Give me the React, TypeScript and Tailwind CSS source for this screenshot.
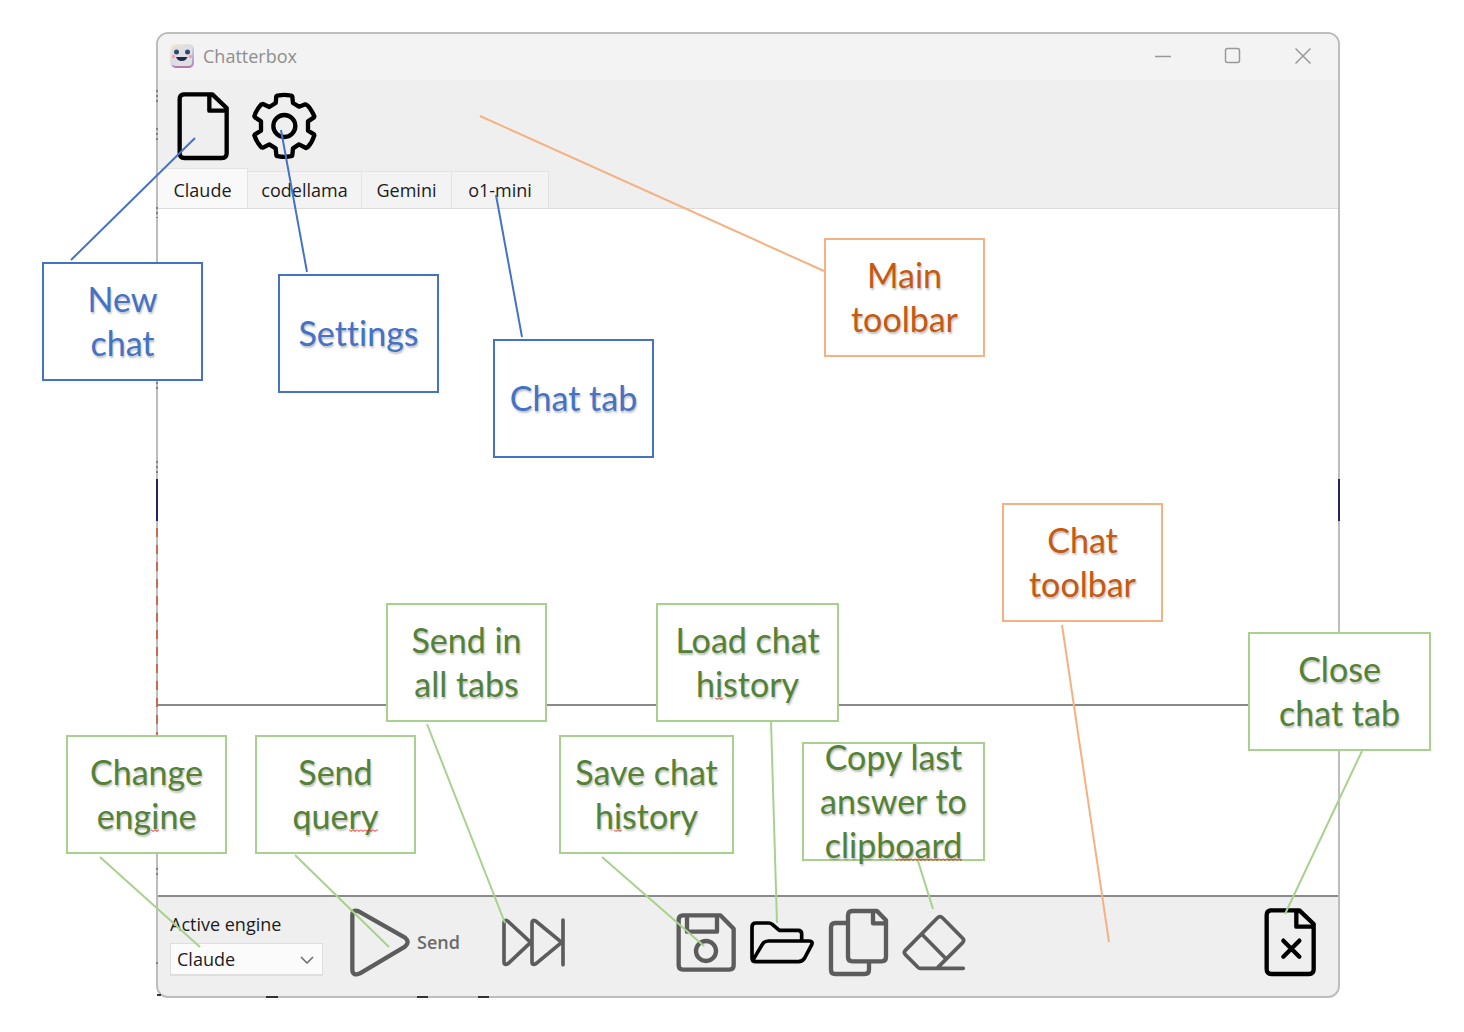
import type { ReactNode } from 'react';

type Tone = 'blue' | 'orange' | 'green';

const tones: Record<Tone, string> = {
  blue: 'border-[#4472c4] text-[#4472c4]',
  orange: 'border-[#f4b183] text-[#c55a11]',
  green: 'border-[#a9d18e] text-[#548235]',
};

const strokes: Record<Tone, string> = {
  blue: '#4472c4',
  orange: '#f4b183',
  green: '#a9d18e',
};

function Callout({ tone, place, children }: { tone: Tone; place: string; children: ReactNode }) {
  return (
    <div
      className={`absolute flex h-[119px] items-center justify-center border-2 bg-white pb-0.5 text-center font-['Lato',sans-serif] text-[34px] leading-[44px] whitespace-nowrap [font-variant-ligatures:none] [text-shadow:1px_2px_2px_rgba(0,0,0,0.25)] ${tones[tone]} ${place}`}
    >
      <p>{children}</p>
    </div>
  );
}

function Zigzag({ children }: { children: ReactNode }) {
  return (
    <span className="relative">
      {children}
      <svg className="absolute bottom-1 left-0 h-[3px] w-full" aria-hidden="true">
        <defs>
          <pattern id="zigzag" width="4" height="3" patternUnits="userSpaceOnUse">
            <path d="M0 .5L2 2.5L4 .5" fill="none" stroke="#ff1010" strokeWidth="1" />
          </pattern>
        </defs>
        <rect width="100%" height="3" fill="url(#zigzag)" />
      </svg>
    </span>
  );
}

const connectors: [Tone, number, number, number, number][] = [
  ['blue', 195, 138, 71, 260],
  ['blue', 281, 130, 307, 272],
  ['blue', 496, 195, 522, 337],
  ['orange', 480, 116, 824, 271],
  ['orange', 1062, 625, 1109, 942],
  ['green', 427, 724, 505, 923],
  ['green', 771, 722, 777, 923],
  ['green', 1362, 751, 1285, 914],
  ['green', 100, 857, 200, 947],
  ['green', 295, 855, 389, 947],
  ['green', 602, 857, 704, 946],
  ['green', 918, 861, 933, 909],
];

function Icon({ box, size, dark, children }: { box: string; size: string; dark?: boolean; children: ReactNode }) {
  return (
    <svg
      viewBox={box}
      className={`block ${size}`}
      fill="none"
      stroke={dark ? '#000' : '#5c5c5c'}
      strokeWidth="13"
      strokeLinejoin="round"
      strokeLinecap="round"
      aria-hidden="true"
    >
      {children}
    </svg>
  );
}

const page = 'M24 13H112L155 54V190Q155 204 141 204H28Q14 204 14 190V27Q14 13 28 13M103 13V62H155';

function Face() {
  return (
    <svg viewBox="0 0 26 26" className="size-[26px]" aria-hidden="true">
      <defs>
        <linearGradient id="rim" x1="0" y1="0" x2="1" y2="1">
          <stop offset="0" stopColor="#f8eccb" />
          <stop offset=".5" stopColor="#d9dbe8" />
          <stop offset="1" stopColor="#a77fd0" />
        </linearGradient>
      </defs>
      <rect x="1" y="1" width="24" height="24" rx="5" fill="url(#rim)" />
      <path d="M3 22Q4 25 8 25H19Q22 25 23 23Z" fill="#b57aab" />
      <rect x="3" y="3" width="20" height="20" rx="4" fill="#dfdfe2" />
      <circle cx="7.500" cy="9" r="2.500" fill="#33486f" />
      <circle cx="18.500" cy="9" r="2.500" fill="#33486f" />
      <circle cx="4.500" cy="13.500" r="1.700" fill="#f3a0b4" />
      <circle cx="21.500" cy="13.500" r="1.700" fill="#f3a0b4" />
      <path d="M7 14H18.500Q17 18 12.700 18T7 14Z" fill="#22284f" />
    </svg>
  );
}

function Tab({ width, active, children }: { width: string; active?: boolean; children: ReactNode }) {
  return (
    <button
      role="tab"
      aria-selected={!!active}
      className={`${width} border-t border-r border-[#e3e3e3] text-center ${
        active ? 'h-[40px] bg-[#f9f9f9] pt-1' : 'h-[37px] bg-[#f3f3f3] pt-px'
      }`}
    >
      {children}
    </button>
  );
}

export default function App() {
  return (
    <main className="relative min-h-screen bg-white pt-8 pr-[124px] pl-[156px] font-['Open_Sans',sans-serif] text-[18px] text-[#1c1c1c]">
      <section className="overflow-hidden rounded-xl border-2 border-[#bdbdbd] bg-[#efefef]">
        <header className="flex h-[46px] items-center bg-[#f3f3f3] pb-0.5 pl-[11px]">
          <Face />
          <h1 className="ml-2 text-[#8e8e8e]">Chatterbox</h1>
          <div className="ml-auto flex items-center pr-[26px] text-[#999]">
            <button aria-label="Minimize" className="mr-[52px]">
              <svg viewBox="0 0 18 18" className="size-[18px]" stroke="currentColor" strokeWidth="1.500">
                <path d="M1 9.500H17" />
              </svg>
            </button>
            <button aria-label="Maximize" className="mr-[52px]">
              <svg viewBox="0 0 18 18" className="size-[18px]" stroke="currentColor" strokeWidth="1.500" fill="none">
                <rect x="1.500" y="1.500" width="14" height="14" rx="2" />
              </svg>
            </button>
            <button aria-label="Close">
              <svg viewBox="0 0 18 18" className="size-[18px]" stroke="currentColor" strokeWidth="1.500">
                <path d="M1.500 1.500L16.500 16.500M16.500 1.500L1.500 16.500" />
              </svg>
            </button>
          </div>
        </header>

        <div className="flex h-[88px] items-center gap-5 pt-1 pl-[17px]" role="toolbar" aria-label="Main toolbar">
          <button aria-label="New chat">
            <Icon dark box="0 0 168 216" size="h-[72px] w-[56px]">
              <path d={page} />
            </Icon>
          </button>
          <button aria-label="Settings">
            <Icon dark box="302 194 204 216" size="h-[72px] w-[68px]">
              <path d="M378 214Q378 210 386 210Q402 207 418 210Q426 210 426 215L428 233L446 244L465 237Q470 237 478 248Q488 262 492 273L491 276L473 288V316L491 327L492 330Q485 352 472 366L467 368L446 357L428 369L426 389Q426 393 418 393Q402 396 386 393Q378 393 378 389L376 369L357 357L338 367L333 366Q318 349 312 330L314 327L332 316V288L314 276L312 273Q316 257 332 238L338 236L357 245L376 233Z" />
              <circle cx="402" cy="302" r="33" />
            </Icon>
          </button>
        </div>

        <div className="flex h-[41px] items-end border-b border-[#dcdcdc]" role="tablist">
          <Tab active width="w-[90px]">Claude</Tab>
          <Tab width="w-[114px]">codellama</Tab>
          <Tab width="w-[90px]">Gemini</Tab>
          <Tab width="w-[97px]">o1-mini</Tab>
        </div>

        <div className="h-[497px] border-b-2 border-[#8a8a8a] bg-white" role="log" />
        <textarea
          aria-label="Query"
          className="block h-[191px] w-full resize-none border-b-2 border-[#8a8a8a] bg-white p-2 outline-none"
        />

        <div className="flex h-[99px] items-start pt-[9px] pr-5 pl-3" role="toolbar" aria-label="Chat toolbar">
          <div className="relative w-[153px]">
            <label htmlFor="engine" className="block pt-1 pb-[5px] leading-[28px]">
              Active engine
            </label>
            <select
              id="engine"
              className="block h-[33px] w-full appearance-none border border-b-2 border-[#dedede] bg-[#fbfbfb] pl-1.5"
            >
              <option>Claude</option>
              <option>codellama</option>
              <option>Gemini</option>
              <option>o1-mini</option>
            </select>
            <svg viewBox="0 0 14 8" className="pointer-events-none absolute right-[9px] bottom-3 h-2 w-3.5" fill="none" stroke="#6a6a6a" strokeWidth="1.500">
              <path d="M1 1L7 7L13 1" />
            </svg>
          </div>
          <div className="flex w-[157px] pl-6">
            <button className="flex items-center gap-1 font-semibold text-[#6a6a6a]">
              <Icon box="591 48 198 216" size="h-[72px] w-[66px]">
                <path d="M607 76Q607 56 626 64L765 143Q781 156 765 170L630 250Q607 260 607 238Z" />
              </Icon>
              <span>Send</span>
            </button>
          </div>
          <button className="ml-auto" aria-label="Send in all tabs">
            <Icon box="1050 48 210 216" size="h-[72px] w-[70px]">
              <path
                strokeWidth="11"
                d="M1065 99Q1065 87 1076 93L1145 157L1078 220Q1065 228 1065 216ZM1149 99Q1149 87 1160 93L1238 157L1162 220Q1149 228 1149 216ZM1242 90V224"
              />
            </Icon>
          </button>
          <div className="ml-[105px] flex gap-[9px]">
            <button aria-label="Save chat history">
              <Icon box="45 48 192 216" size="h-[72px] w-[64px]">
                <path d="M72 76H184L224 116V226Q224 239 211 239H72Q59 239 59 226V89Q59 76 72 76ZM84 76V125H174V76" />
                <circle cx="141" cy="183" r="30" />
              </Icon>
            </button>
            <button aria-label="Load chat history">
              <Icon dark box="264 48 207 216" size="h-[72px] w-[69px]">
                <path
                  strokeWidth="11"
                  d="M428 151V132Q428 121 417 121H361L340 103Q335 99 329 99H291Q279 99 279 111V204Q279 215 291 215H418Q430 215 437 204L457 166Q464 153 450 153H328Q316 153 310 163L281 212"
                />
              </Icon>
            </button>
            <button aria-label="Copy last answer to clipboard">
              <Icon box="495 48 198 216" size="h-[72px] w-[66px]">
                <path d="M577 63H651L678 91V201Q678 214 665 214H577Q564 214 564 201V76Q564 63 577 63ZM639 63V100H678M564 99H526Q513 99 513 112V239Q513 252 526 252H613Q627 252 627 239V214" />
              </Icon>
            </button>
            <button aria-label="Erase">
              <Icon box="720 48 207 216" size="h-[72px] w-[69px]">
                <path strokeWidth="11" d="M910 235H780Q776 235 773 231L736 194Q730 187 736 181L832 84Q840 76 848 84L908 145Q914 151 908 158L833 233M785 132L858 206" />
              </Icon>
            </button>
          </div>
          <button className="ml-[293px]" aria-label="Close chat tab">
            <Icon dark box="0 0 168 216" size="h-[72px] w-[56px]">
              <path d={page} />
              <path d="M64 104L112 152M112 104L64 152" />
            </Icon>
          </button>
        </div>
      </section>

      <svg className="pointer-events-none absolute inset-0 size-full" aria-hidden="true">
        <path d="M157 479V521M1339 479V521" stroke="#25245c" strokeWidth="2" />
        <path d="M157 528V735" stroke="#c96a55" strokeWidth="2" strokeDasharray="9 8" />
        <path d="M157 90v12M157 128v12M157 207v11M157 382v8M157 461v14M157 868v8M157 962v4" stroke="#444" strokeWidth="1" strokeDasharray="2 3" />
        <path d="M266 997h12M417 997h11M478 997h11M157 995h4" stroke="#333" strokeWidth="2" />
      </svg>

      <Callout tone="blue" place="left-[42px] top-[262px] w-[161px]">New<br />chat</Callout>
      <Callout tone="blue" place="left-[278px] top-[274px] w-[161px]">Settings</Callout>
      <Callout tone="blue" place="left-[493px] top-[339px] w-[161px]">Chat tab</Callout>
      <Callout tone="orange" place="left-[824px] top-[238px] w-[161px]">Main<br />toolbar</Callout>
      <Callout tone="orange" place="left-[1002px] top-[503px] w-[161px]">Chat<br />toolbar</Callout>
      <Callout tone="green" place="left-[386px] top-[603px] w-[161px]">Send in<br />all tabs</Callout>
      <Callout tone="green" place="left-[656px] top-[603px] w-[183px]">Load chat<br />h<Zigzag>i</Zigzag>story</Callout>
      <Callout tone="green" place="left-[1248px] top-[632px] w-[183px]">Close<br />chat tab</Callout>
      <Callout tone="green" place="left-[66px] top-[735px] w-[161px]">Change<br />eng<Zigzag>i</Zigzag>ne</Callout>
      <Callout tone="green" place="left-[255px] top-[735px] w-[161px]">Send<br />que<Zigzag>ry</Zigzag></Callout>
      <Callout tone="green" place="left-[559px] top-[735px] w-[175px]">Save chat<br />h<Zigzag>i</Zigzag>story</Callout>
      <Callout tone="green" place="left-[802px] top-[742px] w-[183px]">Copy last<br />answer to<br />clipb<Zigzag>oard</Zigzag></Callout>

      <svg className="pointer-events-none absolute inset-0 size-full" aria-hidden="true">
        {connectors.map(([tone, x1, y1, x2, y2]) => (
          <line key={`${x1}-${y1}`} x1={x1} y1={y1} x2={x2} y2={y2} stroke={strokes[tone]} strokeWidth="2" />
        ))}
      </svg>
    </main>
  );
}
